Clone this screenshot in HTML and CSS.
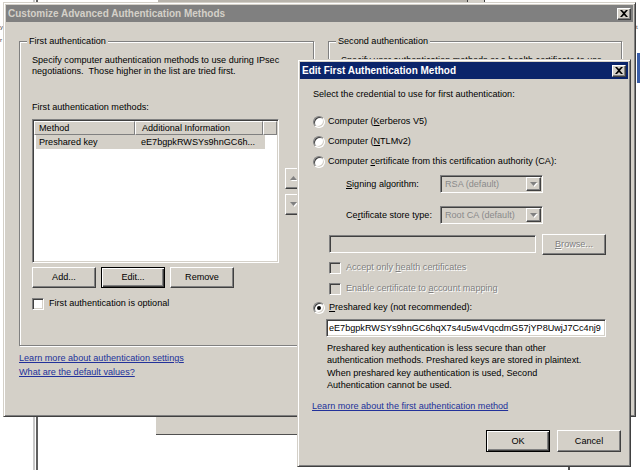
FILE: index.html
```html
<!DOCTYPE html>
<html>
<head>
<meta charset="utf-8">
<title>Edit First Authentication Method</title>
<link rel="stylesheet" href="styles.css">
</head>
<body>
<div class="desk">
  <div class="bg-bar"></div>
  <div class="bg-box"></div>
  <div class="bg-vline"></div>
  <div class="bg-panel"></div>
  <div class="bg-vline2"></div>
  <div class="bg-blue"></div>
  <span class="bg-txt t1">y</span>
  <span class="bg-txt t2">r</span>
  <span class="bg-txt t3">t</span>

  <div class="win main">
    <div class="titlebar inactive">
      <span class="ttl">Customize Advanced Authentication Methods</span>
      <span class="xbtn"><svg width="8" height="7" viewBox="0 0 8 7"><path d="M0 0h2l2 2 2-2h2L5 3.5 8 7H6L4 5 2 7H0l3-3.5z" fill="#000"/></svg></span>
    </div>
    <div class="main-body">
      <div class="groups">
        <div class="group g1">
          <div class="glabel">First authentication</div>
          <p class="desc">Specify computer authentication methods to use during IPsec<br>negotiations.&nbsp; Those higher in the list are tried first.</p>
          <div class="lbl-methods">First authentication methods:</div>
          <div class="list-row">
            <div class="listview">
              <div class="lv-head">
                <div class="lv-h c1">Method</div>
                <div class="lv-h c2">Additional Information</div>
                <div class="lv-h c3"></div>
              </div>
              <div class="lv-item">
                <div class="c1">Preshared key</div>
                <div class="c2">eE7bgpkRWSYs9hnGC6h...</div>
              </div>
            </div>
            <div class="updown">
              <div class="ud"><svg width="7" height="4" viewBox="0 0 7 4"><path d="M3.5 0L7 4H0z" fill="#808080"/></svg></div>
              <div class="ud"><svg width="7" height="4" viewBox="0 0 7 4"><path d="M0 0h7L3.5 4z" fill="#808080"/></svg></div>
            </div>
          </div>
          <div class="btnrow">
            <button class="btn">Add...</button>
            <button class="btn def">Edit...</button>
            <button class="btn">Remove</button>
          </div>
          <div class="chk-row main-chk"><span class="chk"></span><span>First authentication is optional</span></div>
        </div>
        <div class="group g2">
          <div class="glabel">Second authentication</div>
          <p class="desc">Specify user authentication methods or a health certificate to use</p>
        </div>
      </div>
      <div class="links">
        <a class="link">Learn more about authentication settings</a>
        <a class="link">What are the default values?</a>
      </div>
    </div>
  </div>

  <div class="win edit">
    <div class="titlebar active">
      <span class="ttl">Edit First Authentication Method</span>
      <span class="xbtn"><svg width="8" height="7" viewBox="0 0 8 7"><path d="M0 0h2l2 2 2-2h2L5 3.5 8 7H6L4 5 2 7H0l3-3.5z" fill="#000"/></svg></span>
    </div>
    <div class="edit-body">
      <div class="t-select">Select the credential to use for first authentication:</div>
      <div class="radio-row r1"><span class="radio"></span><span>Computer (<u>K</u>erberos V5)</span></div>
      <div class="radio-row r2"><span class="radio"></span><span>Computer (<u>N</u>TLMv2)</span></div>
      <div class="radio-row r3"><span class="radio"></span><span>Computer <u>c</u>ertificate from this certification authority (CA):</span></div>
      <div class="sub-row s1">
        <span class="sub-lbl"><u>S</u>igning algorithm:</span>
        <div class="combo"><span class="cv">RSA (default)</span><span class="dd"><svg width="7" height="4" viewBox="0 0 7 4"><path d="M0 0h7L3.5 4z" fill="#808080"/></svg></span></div>
      </div>
      <div class="sub-row s2">
        <span class="sub-lbl">Ce<u>r</u>tificate store type:</span>
        <div class="combo"><span class="cv">Root CA (default)</span><span class="dd"><svg width="7" height="4" viewBox="0 0 7 4"><path d="M0 0h7L3.5 4z" fill="#808080"/></svg></span></div>
      </div>
      <div class="path-row">
        <div class="tb tb-dis"></div>
        <button class="btn dis"><u>B</u>rowse...</button>
      </div>
      <div class="chk-row dis e1"><span class="chk"></span><span>Accept only <u>h</u>ealth certificates</span></div>
      <div class="chk-row dis e2"><span class="chk"></span><span>Enable certificate to <u>a</u>ccount mapping</span></div>
      <div class="radio-row r4"><span class="radio on"></span><span><u>P</u>reshared key (not recommended):</span></div>
      <div class="tb key">eE7bgpkRWSYs9hnGC6hqX7s4u5w4VqcdmG57jYP8UwjJ7Cc4nj9</div>
      <p class="warn">Preshared key authentication is less secure than other<br>authentication methods. Preshared keys are stored in plaintext.<br>When preshared key authentication is used, Second<br>Authentication cannot be used.</p>
      <a class="link elink">Learn more about the first authentication method</a>
      <div class="okrow">
        <button class="btn def">OK</button>
        <button class="btn">Cancel</button>
      </div>
    </div>
  </div>
</div>
</body>
</html>
```

FILE: styles.css
```css
* { box-sizing: border-box; }
html, body { margin: 0; padding: 0; }
body {
  width: 640px;
  height: 470px;
  overflow: hidden;
  background: #fff;
  font-family: "Liberation Sans", Arial, sans-serif;
  font-size: 9.1px;
  line-height: 11px;
  color: #000;
}
p { margin: 0; }
u { text-decoration: underline; text-underline-offset: 1px; }

.desk { position: relative; width: 640px; height: 470px; overflow: hidden; }

/* background windows */
.bg-bar { position: absolute; left: 158px; top: 0; width: 327px; height: 3px; background: #b8b4ac; border-bottom: 1px solid #606060; }
.bg-box { position: absolute; left: 467px; top: 0; width: 18px; height: 4px; border: 1px solid #404040; border-top: 0; background: #d4d0c8; }
.bg-vline { position: absolute; left: 33px; top: 0; width: 5px; height: 470px; border-left: 2px solid #c8c8c8; border-right: 2px solid #606060; }
.bg-panel { position: absolute; left: 156px; top: 400px; width: 200px; height: 35px; background: #d4d0c8; border-bottom: 1px solid #505050; }
.bg-vline2 { position: absolute; left: 568px; top: 440px; width: 2px; height: 30px; background: #505050; }
.bg-blue { position: absolute; left: 637px; top: 53px; width: 3px; height: 30px; background: #3a5ea8; }
.bg-txt { position: absolute; font-size: 6px; line-height: 7px; color: #333; }
.t1 { left: 0; top: 24px; }
.t2 { left: 0; top: 37px; }
.t3 { left: 636px; top: 24px; }

/* windows */
.win {
  position: absolute;
  background: #d4d0c8;
  border: 1px solid;
  border-color: #d4d0c8 #404040 #404040 #d4d0c8;
  box-shadow: inset 1px 1px 0 #fff, inset -1px -1px 0 #808080;
  padding: 2px;
  display: flex;
  flex-direction: column;
}
.main { left: 3px; top: 2px; width: 633px; height: 415px; }
.edit { left: 297px; top: 59px; width: 334px; height: 408px; }

.titlebar {
  height: 17px;
  flex: none;
  display: flex;
  align-items: center;
  justify-content: space-between;
  padding: 0 2px 0 2px;
  font-weight: bold;
  font-size: 10px;
  white-space: nowrap;
}
.titlebar.active { background: #0a246a; color: #fff; }
.titlebar.inactive { background: #808080; color: #d4d0c8; }
.xbtn {
  width: 14px;
  height: 12px;
  background: #d4d0c8;
  border: 1px solid;
  border-color: #fff #404040 #404040 #fff;
  box-shadow: inset -1px -1px 0 #808080;
  display: flex;
  align-items: center;
  justify-content: center;
}
.xbtn svg { display: block; }

/* main dialog */
.main-body { padding: 19px 0 0 13px; }
.groups { display: flex; gap: 14px; }
.group {
  height: 305px;
  border: 1px solid #808080;
  box-shadow: inset 1px 1px 0 #fff, 1px 1px 0 #fff;
  padding-left: 12px;
}
.g1 { width: 295px; }
.g2 { width: 294px; }
.glabel {
  width: fit-content;
  margin: -7px 0 0 -5px;
  padding: 0 2px;
  line-height: 12px;
  background: #d4d0c8;
}
.desc { margin-top: 8px; line-height: 11px; }
.lbl-methods { margin-top: 24.5px; }
.list-row { margin-top: 6.5px; display: flex; align-items: center; gap: 6px; }
.listview {
  width: 247px;
  height: 144px;
  background: #fff;
  border: 1px solid;
  border-color: #808080 #fff #fff #808080;
  box-shadow: inset 1px 1px 0 #404040, inset -1px -1px 0 #d4d0c8;
  padding: 1px;
}
.lv-head { display: flex; height: 14px; }
.lv-h {
  background: #d4d0c8;
  border: 1px solid;
  border-color: #fff #808080 #808080 #fff;
  line-height: 12px;
  padding-left: 4px;
  white-space: nowrap;
}
.lv-head .c1 { width: 101px; }
.lv-head .c2 { width: 128px; padding-left: 6px; }
.lv-head .c3 { flex: 1; }
.lv-item { display: flex; margin-left: 2px; width: 229px; height: 14px; line-height: 14px; background: #d4d0c8; }
.lv-item .c1 { width: 99px; padding-left: 3px; }
.lv-item .c2 { padding-left: 6px; white-space: nowrap; }

.updown { display: flex; flex-direction: column; gap: 5px; }
.ud {
  width: 17px;
  height: 21px;
  background: #d4d0c8;
  border: 1px solid;
  border-color: #fff #404040 #404040 #fff;
  box-shadow: inset -1px -1px 0 #808080;
  display: flex;
  align-items: center;
  justify-content: center;
}
.ud svg { display: block; filter: drop-shadow(1px 1px 0 #fff); }

.btnrow { margin-top: 4px; display: flex; gap: 5px; }
.btn {
  width: 64px;
  height: 21px;
  padding: 0;
  font: inherit;
  color: #000;
  background: #d4d0c8;
  border: 1px solid;
  border-color: #fff #404040 #404040 #fff;
  box-shadow: inset -1px -1px 0 #808080;
  text-align: center;
  line-height: 17px;
}
.btn.def {
  border: 1px solid #000;
  box-shadow: inset 1px 1px 0 #fff, inset -1px -1px 0 #404040, inset -2px -2px 0 #808080;
}
.btn.dis { color: #808080; text-shadow: 1px 1px 0 #fff; }

.chk-row { display: flex; align-items: center; gap: 5px; height: 13px; white-space: nowrap; }
.main-chk { margin-top: 9px; }
.chk {
  width: 12px;
  height: 12px;
  flex: none;
  background: #fff;
  border: 1px solid;
  border-color: #808080 #fff #fff #808080;
  box-shadow: inset 1px 1px 0 #404040, inset -1px -1px 0 #d4d0c8;
}
.chk-row.dis { color: #808080; }
.chk-row.dis span:last-child { text-shadow: 1px 1px 0 #fff; }
.chk-row.dis .chk { background: #d4d0c8; }

.links { margin-top: 5px; display: flex; flex-direction: column; }
.link { color: #22319a; text-decoration: underline; line-height: 14px; width: fit-content; }

/* edit dialog */
.edit-body { padding: 0 7px 0 13px; display: flex; flex-direction: column; }
.t-select { margin-top: 10px; }
.radio-row { display: flex; align-items: center; gap: 3px; height: 13px; white-space: nowrap; }
.r1 { margin-top: 15px; }
.r2, .r3 { margin-top: 7px; }
.r4 { margin-top: 6px; gap: 4px; }
.radio {
  position: relative;
  width: 12px;
  height: 12px;
  flex: none;
  border-radius: 50%;
  background: #fff;
  border: 1px solid;
  border-color: #808080 #fff #fff #808080;
  box-shadow: inset 1px 1px 0 #404040, inset -1px -1px 0 #d4d0c8;
}
.radio.on::after {
  content: "";
  position: absolute;
  left: 3px;
  top: 3px;
  width: 4px;
  height: 4px;
  border-radius: 50%;
  background: #000;
}
.sub-row { display: flex; align-items: center; margin-left: 33px; height: 18px; }
.s1 { margin-top: 7px; }
.s2 { margin-top: 13px; }
.sub-lbl { width: 94px; white-space: nowrap; }
.combo {
  width: 103px;
  height: 18px;
  display: flex;
  align-items: center;
  justify-content: space-between;
  background: #d4d0c8;
  border: 1px solid;
  border-color: #808080 #fff #fff #808080;
  box-shadow: inset 1px 1px 0 #404040, inset -1px -1px 0 #d4d0c8;
  padding: 1px;
}
.cv { color: #8a8a8a; padding-left: 3px; }
.dd {
  width: 15px;
  height: 14px;
  background: #d4d0c8;
  border: 1px solid;
  border-color: #fff #404040 #404040 #fff;
  box-shadow: inset -1px -1px 0 #808080;
  display: flex;
  align-items: center;
  justify-content: center;
}
.dd svg { display: block; filter: drop-shadow(1px 1px 0 #fff); }

.path-row { margin-top: 10px; margin-left: 16px; display: flex; align-items: center; gap: 6px; height: 20px; }
.tb {
  height: 18px;
  background: #fff;
  border: 1px solid;
  border-color: #808080 #fff #fff #808080;
  box-shadow: inset 1px 1px 0 #404040, inset -1px -1px 0 #d4d0c8;
}
.tb-dis { width: 207px; background: #d4d0c8; }
.e1 { margin-top: 7px; margin-left: 16px; }
.e2 { margin-top: 8px; margin-left: 16px; }
.key {
  margin-top: 5px;
  margin-left: 13px;
  width: 280px;
  padding: 0 2px;
  line-height: 16px;
  white-space: nowrap;
  overflow: hidden;
}
.warn { margin-top: 5px; margin-left: 14px; line-height: 12.3px; }
.elink { margin-top: 9px; margin-left: -1px; line-height: 13px; }
.okrow { margin-top: 17px; display: flex; justify-content: flex-end; gap: 7px; }
.okrow .btn { height: 22px; line-height: 18px; }
```
